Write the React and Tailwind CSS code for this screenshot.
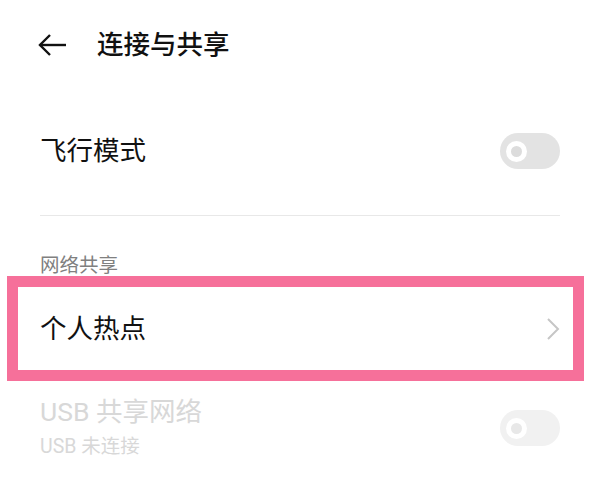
import React from 'react';

const font = { fontFamily: '"Roboto", "Noto Sans CJK SC", sans-serif' };

// Small off-state switch used in the list
const Toggle = ({ disabled }) => (
    <div className={`w-[60px] h-[36px] rounded-full flex items-center pl-[6px] ${disabled ? 'bg-[#f1f1f1]' : 'bg-[#e3e3e3]'}`}>
        <div className="w-[21px] h-[21px] rounded-full bg-white flex items-center justify-center">
            <div className={`w-[11px] h-[11px] rounded-full ${disabled ? 'bg-[#e8e8e8]' : 'bg-[#dcdcdc]'}`} />
        </div>
    </div>
);

const App = () => {
    return (
        <div className="w-[594px] h-[478px] bg-white overflow-hidden" style={font}>
            {/* header */}
            <div className="h-[90px] flex items-center pl-[38px]">
                <svg width="28" height="24" viewBox="0 0 28 24" fill="none" stroke="#111" strokeWidth="2.4" strokeLinecap="square">
                    <path d="M3 12 H27" />
                    <path d="M12 2 L2 12 L12 22" strokeLinecap="butt" strokeLinejoin="miter" />
                </svg>
                <h1 className="ml-[31px] text-[26.5px] leading-[32px] font-medium text-[#111]">连接与共享</h1>
            </div>

            {/* airplane mode */}
            <div className="pl-[40px] pr-[34px]">
                <div className="h-[122px] flex items-center justify-between">
                    <span className="text-[26.5px] leading-[32px] text-[#111]">飞行模式</span>
                    <Toggle />
                </div>
                <div className="mt-[3px] h-px bg-[#e8e8e8]" />
                <div className="pt-[40px] text-[19.5px] leading-[20px] text-[#808080]">网络共享</div>
            </div>

            {/* highlighted hotspot row */}
            <div className="ml-[7px] mr-[10px] h-[105px] border-[11px] border-[#f6709a] flex items-center justify-between pl-[22px] pr-[13px]">
                <span className="text-[26.5px] leading-[32px] text-[#111]">个人热点</span>
                <svg width="14" height="24" viewBox="0 0 14 24" fill="none" stroke="#c6c6c6" strokeWidth="2">
                    <path d="M2 2 L12 12 L2 22" />
                </svg>
            </div>

            {/* usb tethering, disabled */}
            <div className="pl-[40px] pr-[34px] pt-[15px] flex items-center justify-between">
                <div>
                    <div className="text-[26.5px] leading-[32px] text-[#d8d8d8]">USB 共享网络</div>
                    <div className="mt-[6px] text-[19.5px] leading-[26px] text-[#d8d8d8]">USB 未连接</div>
                </div>
                <Toggle disabled />
            </div>
        </div>
    );
};

export default App;
